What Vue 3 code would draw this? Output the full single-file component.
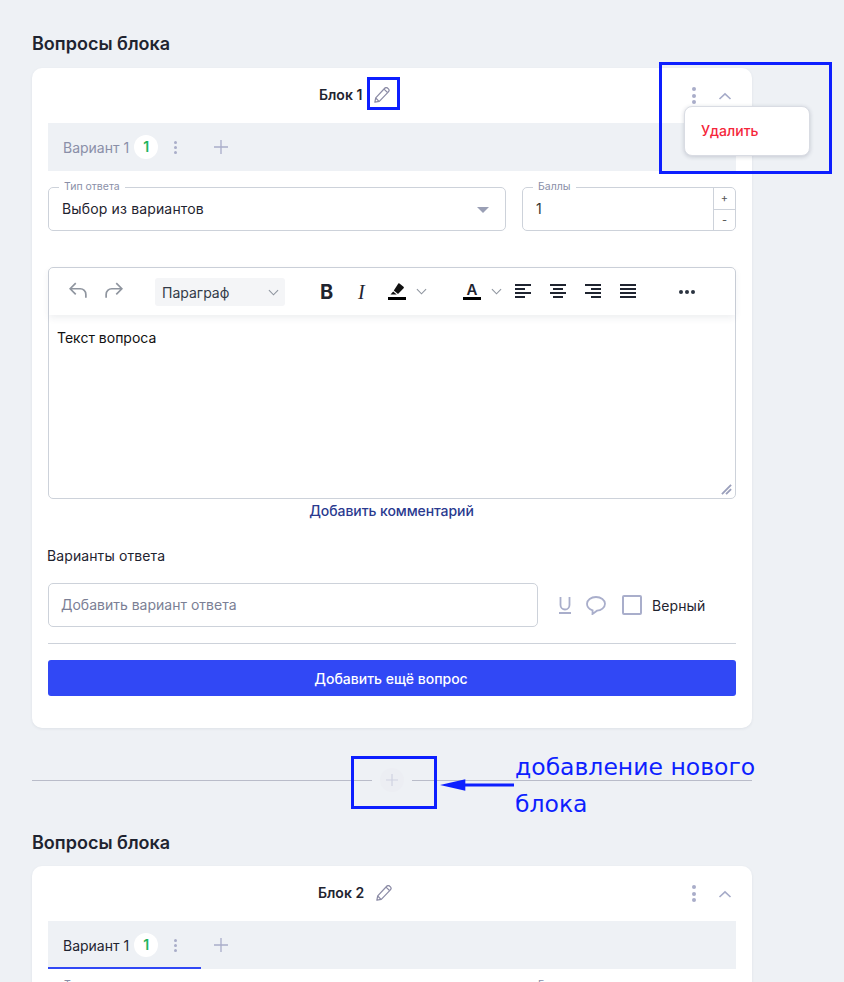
<script setup>
const blocks = [
  { id: 1, name: "Блок 1", active: false, full: true },
  { id: 2, name: "Блок 2", active: true, full: false },
];
const dark = "#1f2430";
</script>

<template>
  <div class="page">
    <template v-for="(block, i) in blocks" :key="block.id">
      <h2 class="section-title">Вопросы блока</h2>
      <div class="card" :class="{ cut: !block.full }">
        <div class="card-head">
          <div class="head-title" :class="{ second: i === 1 }">
            <span>{{ block.name }}</span>
            <svg class="pencil" viewBox="1.5 1.5 13 13" fill="none" stroke="#8c8ca6" stroke-width="1" stroke-linejoin="round">
              <path d="M2.2 13.8l.7-3.4 7.3-7.9a1.7 1.7 0 0 1 2.5 0l.5.5a1.7 1.7 0 0 1 0 2.4l-7.4 7.8z" />
              <path d="M2.9 10.4l2.7 2.8M9.6 3.2l2.9 2.8" />
            </svg>
          </div>
          <div class="head-actions">
            <span class="dots big"><i></i><i></i><i></i></span>
            <svg class="chevron" viewBox="0 0 14 8" fill="none" stroke="#a5aac8" stroke-width="1.6">
              <path d="M1.500 7L7 1.800 12.500 7" />
            </svg>
          </div>
        </div>

        <div class="tabs">
          <div class="tab" :class="{ active: block.active }">
            <span class="tab-name">Вариант 1</span>
            <span class="tab-count">1</span>
            <span class="dots"><i></i><i></i><i></i></span>
          </div>
          <svg class="tab-plus" viewBox="0 0 14 14" stroke="#a9adc9" stroke-width="1.3">
            <path d="M7 0v14M0 7h14" />
          </svg>
        </div>

        <div class="body">
          <div class="row">
            <fieldset class="field type-field">
              <legend>Тип ответа</legend>
              <span class="field-value">Выбор из вариантов</span>
              <span class="caret"></span>
            </fieldset>
            <fieldset class="field score-field">
              <legend>Баллы</legend>
              <span class="field-value score">1</span>
              <div class="stepper">
                <span>+</span>
                <span>-</span>
              </div>
            </fieldset>
          </div>

          <template v-if="block.full">
            <div class="editor">
              <div class="toolbar">
                <svg class="tool undo" viewBox="2 2 16 16" fill="none" stroke="#8f959f" stroke-width="1.5">
                  <path d="M8 3L3 8l5 5M3 8h9a5 5 0 0 1 5 5v3" />
                </svg>
                <svg class="tool redo" viewBox="2 2 16 16" fill="none" stroke="#8f959f" stroke-width="1.5">
                  <path d="M12 3l5 5-5 5M17 8H8a5 5 0 0 0-5 5v3" />
                </svg>
                <div class="para-select">
                  <span>Параграф</span>
                  <svg class="small-chev" viewBox="0 0 12 7" fill="none" stroke="#8f959f" stroke-width="1.2"><path d="M1 1l5 5 5-5" /></svg>
                </div>
                <span class="tool-b">B</span>
                <span class="tool-i">I</span>
                <span class="color-tool marker">
                  <svg viewBox="0 0 18 12" fill="#111"><path d="M11.500.6l4 3.200a1 1 0 0 1 .1 1.400L10 11 5.800 7.600 10 1a1 1 0 0 1 1.500-.4zM5.200 8.500l3.600 3H2.500z" /></svg>
                </span>
                <svg class="small-chev c1" viewBox="0 0 12 7" fill="none" stroke="#8f959f" stroke-width="1.2"><path d="M1 1l5 5 5-5" /></svg>
                <span class="color-tool letter">A</span>
                <svg class="small-chev c2" viewBox="0 0 12 7" fill="none" stroke="#8f959f" stroke-width="1.2"><path d="M1 1l5 5 5-5" /></svg>
                <svg class="align a1" viewBox="0 0 16 14" :stroke="dark" stroke-width="2"><path d="M0 1h16M0 5h10M0 9h16M0 13h10" /></svg>
                <svg class="align a2" viewBox="0 0 16 14" :stroke="dark" stroke-width="2"><path d="M0 1h16M3 5h10M0 9h16M3 13h10" /></svg>
                <svg class="align a3" viewBox="0 0 16 14" :stroke="dark" stroke-width="2"><path d="M0 1h16M6 5h10M0 9h16M6 13h10" /></svg>
                <svg class="align a4" viewBox="0 0 16 14" :stroke="dark" stroke-width="2"><path d="M0 1h16M0 5h16M0 9h16M0 13h16" /></svg>
                <span class="more"><i></i><i></i><i></i></span>
              </div>
              <div class="editor-text">Текст вопроса</div>
              <svg class="resize" viewBox="0 0 12 12" stroke="#9a9fbb" stroke-width="2"><path d="M1 11L11 1M5.500 11L11 5.500" /></svg>
            </div>
            <a class="comment-link">Добавить комментарий</a>

            <div class="answers-title">Варианты ответа</div>
            <div class="answer-row">
              <div class="answer-input">Добавить вариант ответа</div>
              <svg class="u-icon" viewBox="0 0 12 17" fill="none" stroke="#a9aecb" stroke-width="1.800">
                <path d="M1.500 0v8a4.500 4.500 0 0 0 9 0V0M0 16h12" />
              </svg>
              <svg class="bubble" viewBox="0 0 20 19" fill="none" stroke="#a9aecb" stroke-width="1.800">
                <path d="M10 1c5 0 9 3 9 6.800 0 3.800-4 6.700-8 6.900L6.500 18l.1-3.700C3 13.200 1 10.800 1 7.800 1 4 5 1 10 1z" />
              </svg>
              <span class="check"></span>
              <span class="check-label">Верный</span>
            </div>
            <div class="divider"></div>
            <button class="add-btn">Добавить ещё вопрос</button>
          </template>
        </div>

        <div v-if="i === 0" class="menu">Удалить</div>
      </div>

      <div v-if="i === 0" class="block-sep">
        <span class="sep-line"></span>
        <span class="sep-plus">
          <svg viewBox="0 0 12 12" stroke="#cfd2e2" stroke-width="1.200"><path d="M6 0v12M0 6h12" /></svg>
        </span>
        <span class="sep-line"></span>
      </div>
    </template>

    <!-- пометки поверх макета -->
    <span class="mark mark-pencil"></span>
    <span class="mark mark-menu"></span>
    <span class="mark mark-plus"></span>
    <svg class="arrow" viewBox="0 0 76 12" fill="#0d1fff">
      <path d="M0 6l26-6v4.500h50v3H26V12z" />
    </svg>
    <div class="note">добавление нового<br />блока</div>
  </div>
</template>

<style>
html,
body {
  margin: 0;
  height: 982px;
  overflow: hidden;
  background: #eef1f5;
}
</style>

<style scoped>
.page {
  position: relative;
  box-sizing: border-box;
  width: 844px;
  height: 982px;
  overflow: hidden;
  padding: 34px 92px 0 32px;
  background: #eef1f5;
  font-family: Inter, "Noto Sans", sans-serif;
  color: #1f2430;
}

.section-title {
  margin: 0 0 14px;
  font-size: 18px;
  line-height: 20px;
  font-weight: 600;
  color: #1f2430;
}

.card {
  position: relative;
  background: #fff;
  border-radius: 10px;
  box-shadow: 0 1px 3px rgba(40, 50, 80, 0.08);
  padding-bottom: 32px;
}

.card.cut {
  margin-top: -1px;
}

/* шапка блока */
.card-head {
  position: relative;
  height: 55px;
  display: flex;
  align-items: center;
  padding-left: 287px;
}

.head-title {
  display: flex;
  align-items: center;
  gap: 12px;
  font-size: 14px;
  font-weight: 600;
  margin-top: -2px;
}

.head-title.second {
  margin-left: -1px;
}

.pencil {
  width: 16px;
  height: 16px;
}

.head-actions {
  position: absolute;
  right: 20px;
  top: 19px;
  display: flex;
  align-items: center;
  gap: 22px;
}

.chevron {
  width: 14px;
  height: 8px;
}

.dots {
  display: inline-flex;
  flex-direction: column;
  gap: 2px;
}

.dots i {
  width: 3px;
  height: 3px;
  border-radius: 50%;
  background: #a9adc9;
}

.dots.big {
  gap: 2.500px;
}

.dots.big i {
  width: 4px;
  height: 4px;
}

/* варианты */
.tabs {
  display: flex;
  align-items: center;
  height: 48px;
  margin: 0 16px;
  background: #eef1f5;
}

.tab {
  box-sizing: border-box;
  display: flex;
  align-items: center;
  width: 153px;
  height: 48px;
  padding-left: 15px;
  font-size: 14px;
  color: #8a8fa8;
}

.tab.active {
  color: #1f2430;
  border-bottom: 2px solid #3148f5;
  padding-top: 2px;
}

.tab-count {
  width: 24px;
  height: 24px;
  margin-left: 5px;
  border-radius: 50%;
  background: #fff;
  color: #22b35e;
  font-weight: 600;
  font-size: 14px;
  line-height: 24px;
  text-align: center;
}

.tab .dots {
  margin-left: 16px;
}

.tab-plus {
  width: 14px;
  height: 14px;
  margin-left: 13px;
}

/* форма */
.body {
  padding: 10px 16px 0;
}

.row {
  display: flex;
  gap: 16px;
}

.field {
  position: relative;
  box-sizing: border-box;
  margin: 0;
  padding: 0;
  height: 50px;
  border: 1px solid #cdd2da;
  border-radius: 5px;
  min-width: 0;
}

.field legend {
  margin-left: 10px;
  padding: 0 5px;
  font-size: 10.500px;
  line-height: 12px;
  color: #8a8fa8;
}

.type-field {
  flex: 1;
}

.score-field {
  width: 214px;
}

.field-value {
  position: absolute;
  left: 13px;
  top: 2px;
  font-size: 14px;
  line-height: 28px;
  letter-spacing: 0.15px;
}

.field-value.score {
  color: #333;
}

.caret {
  position: absolute;
  right: 16px;
  top: 14px;
  border-left: 6px solid transparent;
  border-right: 6px solid transparent;
  border-top: 6px solid #9a9fb5;
}

.stepper {
  position: absolute;
  top: -6px;
  right: 0;
  bottom: 0;
  width: 21px;
  display: grid;
  grid-template-rows: 1fr 1fr;
  border-left: 1px solid #cdd2da;
  font-size: 11px;
  color: #555;
}

.stepper span {
  display: flex;
  align-items: center;
  justify-content: center;
}

.stepper span + span {
  border-top: 1px solid #cdd2da;
}

/* редактор */
.editor {
  position: relative;
  box-sizing: border-box;
  height: 232px;
  margin-top: 36px;
  border: 1px solid #cdd2da;
  border-radius: 5px;
}

.toolbar {
  position: relative;
  height: 47px;
  box-shadow: 0 3px 7px rgba(40, 50, 80, 0.08);
}

.tool {
  position: absolute;
  top: 14px;
  width: 18px;
  height: 18px;
}

.undo {
  left: 20px;
}

.redo {
  left: 56px;
}

.para-select {
  position: absolute;
  left: 106px;
  top: 10px;
  box-sizing: border-box;
  width: 130px;
  height: 28px;
  padding: 1px 6px 0 7px;
  display: flex;
  align-items: center;
  justify-content: space-between;
  background: #f4f5f7;
  border-radius: 3px;
  font-size: 14px;
  color: #333b48;
}

.small-chev {
  width: 11px;
  height: 7px;
}

.tool-b {
  position: absolute;
  left: 271px;
  top: 13px;
  font-size: 20px;
  line-height: 22px;
  font-weight: 700;
  color: #1f2430;
}

.tool-i {
  position: absolute;
  left: 309px;
  top: 13px;
  font-family: "Liberation Serif", serif;
  font-style: italic;
  font-size: 20px;
  line-height: 22px;
  color: #1f2430;
}

.color-tool {
  position: absolute;
  top: 14px;
  width: 18px;
  height: 18px;
  border-bottom: 3px solid #000;
  box-sizing: border-box;
}

.marker {
  left: 339px;
}

.marker svg {
  display: block;
  width: 18px;
  height: 12px;
  margin-top: 1px;
}

.letter {
  left: 414px;
  width: 18px;
  text-align: center;
  font-size: 15px;
  line-height: 15px;
  font-weight: 600;
}

.c1 {
  position: absolute;
  left: 367px;
  top: 20px;
}

.c2 {
  position: absolute;
  left: 442px;
  top: 20px;
}

.align {
  position: absolute;
  top: 16px;
  width: 16px;
  height: 14px;
}

.a1 {
  left: 466px;
}

.a2 {
  left: 501px;
}

.a3 {
  left: 536px;
}

.a4 {
  left: 571px;
}

.more {
  position: absolute;
  left: 630px;
  top: 22px;
  display: flex;
  gap: 2px;
}

.more i {
  width: 4px;
  height: 4px;
  border-radius: 50%;
  background: #2b3340;
}

.editor-text {
  padding: 13px 8px 0;
  font-size: 14px;
  line-height: 20px;
  color: #111;
}

.resize {
  position: absolute;
  right: 3px;
  bottom: 3px;
  width: 11px;
  height: 11px;
}

.comment-link {
  display: block;
  margin-top: 3px;
  margin-left: -1px;
  text-align: center;
  font-size: 14px;
  line-height: 17px;
  font-weight: 500;
  letter-spacing: -0.08px;
  color: #2a3a8f;
}

.answers-title {
  margin-top: 28px;
  font-size: 14px;
  line-height: 17px;
  font-weight: 400;
  letter-spacing: 0.1px;
  margin-left: -1px;
}

.answer-row {
  display: flex;
  align-items: center;
  margin-top: 19px;
}

.answer-input {
  box-sizing: border-box;
  width: 490px;
  height: 44px;
  padding-left: 12px;
  border: 1px solid #cdd2da;
  border-radius: 5px;
  font-size: 14px;
  line-height: 42px;
  color: #7b7f95;
}

.u-icon {
  width: 12px;
  height: 17px;
  margin-left: 21px;
}

.bubble {
  width: 20px;
  height: 19px;
  margin-left: 15px;
}

.check {
  box-sizing: border-box;
  width: 20px;
  height: 20px;
  margin-left: 16px;
  border: 2px solid #a9aecb;
  border-radius: 2px;
}

.check-label {
  margin-left: 10px;
  font-size: 14px;
  font-weight: 400;
  letter-spacing: 0.1px;
}

.divider {
  height: 1px;
  margin-top: 16px;
  background: #cdd2da;
}

.add-btn {
  display: block;
  width: 100%;
  height: 36px;
  margin-top: 16px;
  padding: 0 2px 0 0;
  border: none;
  border-radius: 3px;
  background: #3148f5;
  color: #fff;
  font-family: inherit;
  font-size: 14px;
  font-weight: 500;
}

.menu {
  position: absolute;
  left: 652px;
  top: 38px;
  box-sizing: border-box;
  width: 126px;
  height: 50px;
  padding-left: 16px;
  background: #fff;
  border: 1px solid #d9dce3;
  border-radius: 8px;
  box-shadow: 0 1px 4px rgba(30, 40, 70, 0.2);
  font-size: 14px;
  font-weight: 500;
  line-height: 48px;
  color: #f5263a;
}

/* разделитель блоков */
.block-sep {
  display: flex;
  align-items: center;
  height: 24px;
  margin: 40px 0 41px;
}

.sep-line {
  flex: 1;
  height: 1px;
  background: #b9bcc9;
}

.sep-plus {
  width: 24px;
  height: 24px;
  margin: 0 8px;
  border-radius: 50%;
  background: #eceef3;
  display: flex;
  align-items: center;
  justify-content: center;
}

.sep-plus svg {
  width: 12px;
  height: 12px;
}

/* синие пометки */
.mark {
  position: absolute;
  box-sizing: border-box;
  border: 3px solid #0d1fff;
}

.mark-pencil {
  left: 367px;
  top: 77px;
  width: 33px;
  height: 33px;
}

.mark-menu {
  left: 659px;
  top: 62px;
  width: 173px;
  height: 112px;
}

.mark-plus {
  left: 351px;
  top: 756px;
  width: 86px;
  height: 53px;
}

.arrow {
  position: absolute;
  left: 440px;
  top: 779px;
  width: 74px;
  height: 12px;
}

.note {
  position: absolute;
  left: 515px;
  top: 749px;
  font-family: "DejaVu Sans", sans-serif;
  font-size: 23.500px;
  line-height: 37px;
  color: #0d1fff;
  white-space: nowrap;
}
</style>
